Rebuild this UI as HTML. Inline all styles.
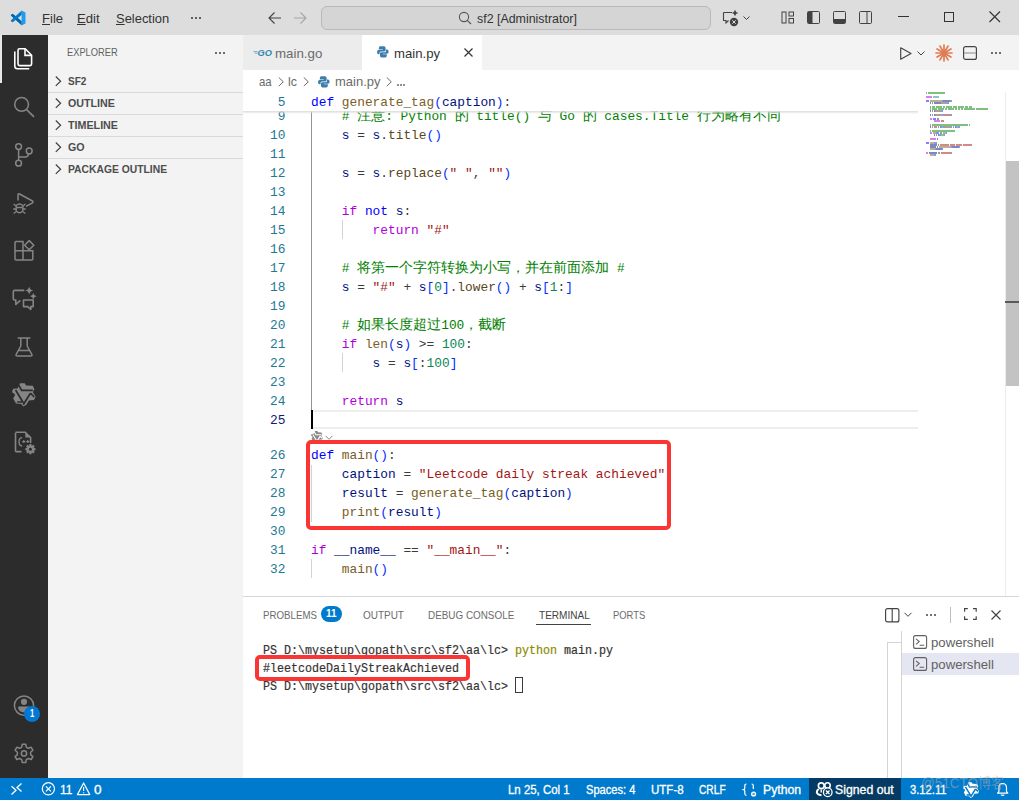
<!DOCTYPE html>
<html><head><meta charset="utf-8">
<style>
*{margin:0;padding:0;box-sizing:border-box}
html,body{width:1019px;height:800px;overflow:hidden;background:#fff;font-family:"Liberation Sans",sans-serif;position:relative}
.a{position:absolute}
svg{position:absolute;overflow:visible}
.t{position:absolute;white-space:pre;line-height:1;transform-origin:0 0}
.cl{position:absolute;white-space:pre;font-family:"Liberation Mono",monospace;font-size:12.83px;line-height:19px;height:19px;left:311px}
.cj{font-size:14px}
.ln{position:absolute;white-space:pre;font-family:"Liberation Mono",monospace;font-size:12.83px;line-height:19px;height:19px;color:#237893;text-align:right;width:80px;left:205.5px}
.k{color:#0000ff}.f{color:#795e26}.m{color:#5a4520}.p{color:#001080}.c{color:#008000}.s{color:#a31515}.kc{color:#af00db}.n{color:#098658}.b{color:#0431fa}.o{color:#3b3b3b}
.tl{position:absolute;white-space:pre;font-family:"Liberation Mono",monospace;font-size:13px;line-height:18px;height:18px;left:263px;color:#333;transform:scaleX(0.8975);transform-origin:0 0;-webkit-text-stroke:0.2px #333}
</style></head><body>
<div class="a" style="left:0px;top:0px;width:1019px;height:35px;background:#dddddd;"></div>
<div class="a" style="left:0px;top:35px;width:48px;height:743px;background:#2c2c2c;"></div>
<div class="a" style="left:0px;top:35px;width:2px;height:48px;background:#e8e8e8;"></div>
<div class="a" style="left:48px;top:35px;width:195px;height:743px;background:#f3f3f3;"></div>
<div class="a" style="left:243px;top:35px;width:776px;height:35px;background:#f3f3f3;"></div>
<div class="a" style="left:243px;top:35px;width:119px;height:35px;background:#ececec;"></div>
<div class="a" style="left:362px;top:35px;width:120px;height:35px;background:#ffffff;"></div>
<div class="a" style="left:0px;top:778px;width:1019px;height:22px;background:#007acc;"></div>
<svg class="a" style="left:10px;top:10px" width="16" height="16" viewBox="0 0 16 16"><path d="M11.8 15.4 L1 5.7 Q0.5 5.2 1 4.8 L2.1 3.9 Q2.6 3.6 3.1 3.9 L11.8 11.2 Z" fill="#0065a9"/><path d="M11.8 0.6 L1 10.3 Q0.5 10.8 1 11.2 L2.1 12.1 Q2.6 12.4 3.1 12.1 L11.8 4.8 Z" fill="#007acc"/><path d="M11.6 0.5 L15 2.2 Q15.5 2.5 15.5 3 V13 Q15.5 13.5 15 13.8 L11.6 15.5 Z" fill="#1f9cf0"/></svg>
<div class="t" style="left:42.15px;top:12.30px;font-size:13px;font-weight:normal;color:#333;font-family:'Liberation Sans',sans-serif;transform:scaleX(1.0049);"><u>F</u>ile</div>
<div class="t" style="left:77.35px;top:12.30px;font-size:13px;font-weight:normal;color:#333;font-family:'Liberation Sans',sans-serif;transform:scaleX(1.0068);"><u>E</u>dit</div>
<div class="t" style="left:115.62px;top:12.30px;font-size:13px;font-weight:normal;color:#333;font-family:'Liberation Sans',sans-serif;transform:scaleX(0.9949);"><u>S</u>election</div>
<div class="a" style="left:191px;top:17px;width:2px;height:2px;background:#333;border-radius:1px"></div>
<div class="a" style="left:195px;top:17px;width:2px;height:2px;background:#333;border-radius:1px"></div>
<div class="a" style="left:199px;top:17px;width:2px;height:2px;background:#333;border-radius:1px"></div>
<svg class="a" style="left:267px;top:11px" width="15" height="14" viewBox="0 0 15 14"><path d="M7.5 1.5 L2 7 L7.5 12.5 M2 7 H14" stroke="#424242" stroke-width="1.1" fill="none"/></svg>
<svg class="a" style="left:293px;top:11px" width="15" height="14" viewBox="0 0 15 14"><path d="M7.5 1.5 L13 7 L7.5 12.5 M13 7 H1" stroke="#a6a6a6" stroke-width="1.1" fill="none"/></svg>
<div class="a" style="left:321px;top:6px;width:390px;height:24px;background:#d5d5d5;border:1px solid #b9b9b9;border-radius:6px"></div>
<svg class="a" style="left:458px;top:11px" width="14" height="14" viewBox="0 0 14 14"><circle cx="6" cy="6" r="4.6" stroke="#555" stroke-width="1.1" fill="none"/><path d="M9.3 9.3 L13 13" stroke="#555" stroke-width="1.2"/></svg>
<div class="t" style="left:476.63px;top:13.34px;font-size:12px;font-weight:normal;color:#333;font-family:'Liberation Sans',sans-serif;transform:scaleX(1.0329);">sf2 [Administrator]</div>
<svg class="a" style="left:722px;top:10px" width="30" height="16" viewBox="0 0 30 16"><path d="M1.5 2.5 H10 M1.5 2.5 V10.5 H4 V13 L6.5 10.5" stroke="#424242" stroke-width="1.1" fill="none"/><path d="M13 -0.20000000000000018 Q13.512 2.488 16.2 3 Q13.512 3.512 13 6.2 Q12.488 3.512 9.8 3 Q12.488 2.488 13 -0.20000000000000018Z" fill="#424242"/><circle cx="12" cy="12" r="4.2" fill="#424242"/><path d="M10.3 10.3 L13.7 13.7 M13.7 10.3 L10.3 13.7" stroke="#ddd" stroke-width="1"/><path d="M21.5 6.5 L24.5 9.5 L27.5 6.5" stroke="#424242" stroke-width="1" fill="none"/></svg>
<svg class="a" style="left:781px;top:11px" width="14" height="13" viewBox="0 0 14 13"><rect x="1" y="1" width="4" height="11" stroke="#424242" stroke-width="1" fill="none"/><rect x="8" y="1" width="4.5" height="4" stroke="#424242" stroke-width="1" fill="none"/><rect x="8" y="7.5" width="4.5" height="4.5" stroke="#424242" stroke-width="1" fill="none"/></svg>
<svg class="a" style="left:807px;top:11px" width="14" height="13" viewBox="0 0 14 13"><rect x="0.5" y="0.5" width="12" height="12" rx="1" stroke="#424242" stroke-width="1" fill="none"/><rect x="1" y="1" width="4.5" height="11" fill="#424242"/></svg>
<svg class="a" style="left:833px;top:11px" width="14" height="13" viewBox="0 0 14 13"><rect x="0.5" y="0.5" width="12" height="12" rx="1" stroke="#424242" stroke-width="1" fill="none"/><rect x="1" y="8" width="11" height="4" fill="#424242"/></svg>
<svg class="a" style="left:859px;top:11px" width="14" height="13" viewBox="0 0 14 13"><rect x="0.5" y="0.5" width="12" height="12" rx="1" stroke="#424242" stroke-width="1" fill="none"/><path d="M8 1 V12" stroke="#424242" stroke-width="1"/></svg>
<div class="a" style="left:898px;top:16px;width:11px;height:1px;background:#333;"></div>
<div class="a" style="left:944px;top:12px;width:10px;height:10px;background:transparent;border:1px solid #333"></div>
<svg class="a" style="left:989px;top:11px" width="12" height="12" viewBox="0 0 12 12"><path d="M0.5 0.5 L11 11 M11 0.5 L0.5 11" stroke="#333" stroke-width="1.1"/></svg>
<svg class="a" style="left:12px;top:47px" width="24" height="24" viewBox="0 0 24 24"><path d="M7.6 1.8 H13.2 L19.6 8.2 V17 Q19.6 18.6 18 18.6 H7.6 Q6 18.6 6 17 V3.4 Q6 1.8 7.6 1.8 Z" stroke="#fff" stroke-width="1.6" fill="none" stroke-linejoin="round"/><path d="M13 2 V8.4 H19.4" stroke="#fff" stroke-width="1.6" fill="none"/><path d="M2.8 4.4 V19 Q2.8 21.8 5.6 21.8 H17.2" stroke="#fff" stroke-width="1.6" fill="none"/></svg>
<svg class="a" style="left:12px;top:95px" width="24" height="24" viewBox="0 0 24 24"><circle cx="9.6" cy="9.4" r="6.9" stroke="#858585" stroke-width="1.6" fill="none"/><path d="M14.5 14.5 L22 21.8" stroke="#858585" stroke-width="1.7"/></svg>
<svg class="a" style="left:12px;top:143px" width="24" height="24" viewBox="0 0 24 24"><circle cx="6.6" cy="3.6" r="2.9" stroke="#858585" stroke-width="1.5" fill="none"/><circle cx="17.2" cy="8" r="2.9" stroke="#858585" stroke-width="1.5" fill="none"/><circle cx="6.6" cy="20.2" r="2.9" stroke="#858585" stroke-width="1.5" fill="none"/><path d="M6.6 6.5 V17.3 M6.6 14 H13.5 Q16 14 16.6 10.8" stroke="#858585" stroke-width="1.5" fill="none"/></svg>
<svg class="a" style="left:12px;top:191px" width="24" height="24" viewBox="0 0 24 24"><path d="M6 9.5 V3.8 Q6 2.3 7.6 3 L20.5 10 Q21.5 11 20.5 11.8 L14 15.3" stroke="#858585" stroke-width="1.5" fill="none" stroke-linejoin="round"/><path d="M4.2 14.5 Q7.5 11.5 10.8 14.5 V20 Q7.5 23.5 4.2 20 Z" stroke="#858585" stroke-width="1.4" fill="none"/><path d="M4.3 16.5 H10.7 M1.6 13 L4 15 M13.4 13 L11 15 M1.2 18 H4.2 M13.8 18 H10.8 M1.6 22.5 L4 20.8 M13.4 22.5 L11 20.8" stroke="#858585" stroke-width="1.3"/></svg>
<svg class="a" style="left:12px;top:239px" width="24" height="24" viewBox="0 0 24 24"><path d="M4 2.5 H11 V11.8 H20.8 V20 Q20.8 21 19.8 21 H4 Q3 21 3 20 V3.5 Q3 2.5 4 2.5 Z M3 11.8 H11 V21" stroke="#858585" stroke-width="1.5" fill="none"/><path d="M17.2 1.6 L21.8 6.2 L17.2 10.8 L12.6 6.2 Z" stroke="#858585" stroke-width="1.5" fill="none" stroke-linejoin="round"/></svg>
<svg class="a" style="left:12px;top:287px" width="24" height="24" viewBox="0 0 24 24"><path d="M12.3 3.4 H2.6 Q1.3 3.4 1.3 4.7 V11.8 Q1.3 13 2.6 13 H3.8 V17.5 L8.3 13.3" stroke="#858585" stroke-width="1.6" fill="none" stroke-linejoin="round"/><path d="M11.5 13 H21.2 V19.6 H18.8 V22.4 L15.6 19.6 H11.5 Z" stroke="#858585" stroke-width="1.6" fill="none" stroke-linejoin="round"/><path d="M17.2 -0.49999999999999956 Q17.855999999999998 2.944 21.299999999999997 3.6 Q17.855999999999998 4.256 17.2 7.699999999999999 Q16.544 4.256 13.1 3.6 Q16.544 2.944 17.2 -0.49999999999999956Z" fill="#858585"/><path d="M21.3 5.8999999999999995 Q21.828 8.671999999999999 24.6 9.2 Q21.828 9.728 21.3 12.5 Q20.772000000000002 9.728 18.0 9.2 Q20.772000000000002 8.671999999999999 21.3 5.8999999999999995Z" fill="#858585"/></svg>
<svg class="a" style="left:12px;top:335px" width="24" height="24" viewBox="0 0 24 24"><path d="M5.6 3 H18.4 M8.8 3 V11 L4.2 19.3 Q3.5 21 5.3 21 H18.7 Q20.5 21 19.8 19.3 L15.2 11 V3 M6.6 15.4 H17.4" stroke="#858585" stroke-width="1.5" fill="none" stroke-linejoin="round"/></svg>
<svg class="a" style="left:12px;top:383px" width="24" height="24" viewBox="0 0 24 24"><path d="M8 0.2 L12.8 0.2 L14 2.6 L20.8 2.8 L22.4 6.2 L20.8 9 L23.6 13.8 L22 17 L16.8 17.4 L14.4 21.8 L11.2 23.4 L9.2 21 L4 20.6 L1.2 15.4 L3.2 11.8 L0 9 L1.2 5.8 L5.6 5.4 Z" fill="#858585"/><path d="M6.8 2.2 L9.6 7.4 L20.8 7.4 M3.6 7 L10.8 19 L5.2 19 M18.4 10.2 L11.2 21.8 M18.4 10.2 L22.2 14" stroke="#2c2c2c" stroke-width="1.7" fill="none"/></svg>
<svg class="a" style="left:12px;top:431px" width="24" height="24" viewBox="0 0 24 24"><path d="M3.5 1.2 H13.2 L18.6 6.6 V12 M9.5 20.6 H4.2 Q3.5 20.6 3.5 19.8 V1.8" stroke="#858585" stroke-width="1.6" fill="none"/><path d="M13.3 1.3 V6.5 H18.5 Z" fill="#858585"/><path d="M10.2 6.6 Q7 6.6 7 10.8 Q7 15 10.2 15" stroke="#858585" stroke-width="1.3" fill="none"/><path d="M10.3 10.6 H13.3 M11.8 9.1 V12.1 M14.3 10.6 H17.3 M15.8 9.1 V12.1" stroke="#858585" stroke-width="1.1"/><path d="M21.86 16.90 L23.50 17.17 L23.50 19.23 L21.86 19.50 L21.77 19.73 L22.73 21.07 L21.27 22.53 L19.93 21.57 L19.70 21.66 L19.43 23.30 L17.37 23.30 L17.10 21.66 L16.87 21.57 L15.53 22.53 L14.07 21.07 L15.03 19.73 L14.94 19.50 L13.30 19.23 L13.30 17.17 L14.94 16.90 L15.03 16.67 L14.07 15.33 L15.53 13.87 L16.87 14.83 L17.10 14.74 L17.37 13.10 L19.43 13.10 L19.70 14.74 L19.93 14.83 L21.27 13.87 L22.73 15.33 L21.77 16.67Z" fill="#858585"/><circle cx="18.4" cy="18.2" r="1.5" fill="#2c2c2c"/></svg>
<svg class="a" style="left:12px;top:693px" width="24" height="24" viewBox="0 0 24 24"><circle cx="12" cy="12.6" r="9.6" stroke="#858585" stroke-width="1.5" fill="none"/><circle cx="12" cy="8.8" r="3.1" fill="#858585"/><path d="M6 14.6 Q6 13.6 7 13.6 H17 Q18 13.6 18 14.6 Q17 19.5 12 19.5 Q7 19.5 6 14.6Z" fill="#858585"/></svg>
<div class="a" style="left:24px;top:705.5px;width:16px;height:16px;border-radius:8px;background:#0078d4"></div>
<div class="t" style="left:29.74px;top:709.03px;font-size:10px;font-weight:bold;color:#fff;font-family:'Liberation Sans',sans-serif;transform:scaleX(0.7660);">1</div>
<svg class="a" style="left:12px;top:742px" width="24" height="24" viewBox="0 0 24 24"><path d="M10.3 2.2 H13.7 L14.3 5.2 L16.3 6.3 L19.2 5.3 L20.9 8.2 L18.6 10.2 V12.6 L20.9 14.6 L19.2 17.5 L16.3 16.5 L14.3 17.6 L13.7 20.6 H10.3 L9.7 17.6 L7.7 16.5 L4.8 17.5 L3.1 14.6 L5.4 12.6 V10.2 L3.1 8.2 L4.8 5.3 L7.7 6.3 L9.7 5.2 Z" stroke="#858585" stroke-width="1.5" fill="none" stroke-linejoin="round"/><circle cx="12" cy="11.4" r="2.6" stroke="#858585" stroke-width="1.5" fill="none"/></svg>
<div class="t" style="left:67.46px;top:47.49px;font-size:11px;font-weight:normal;color:#616161;font-family:'Liberation Sans',sans-serif;transform:scaleX(0.8459);">EXPLORER</div>
<div class="a" style="left:215px;top:52px;width:2px;height:2px;background:#424242;border-radius:1px"></div>
<div class="a" style="left:219px;top:52px;width:2px;height:2px;background:#424242;border-radius:1px"></div>
<div class="a" style="left:223px;top:52px;width:2px;height:2px;background:#424242;border-radius:1px"></div>
<svg class="a" style="left:54px;top:75px" width="10" height="12" viewBox="0 0 10 12"><path d="M1.8 1.5 L6.6 6.2 L1.8 10.9" stroke="#424242" stroke-width="1.2" fill="none"/></svg>
<div class="t" style="left:67.90px;top:76.19px;font-size:11px;font-weight:bold;color:#4d4d4d;font-family:'Liberation Sans',sans-serif;transform:scaleX(0.9117);">SF2</div>
<div class="a" style="left:48px;top:92px;width:195px;height:1px;background:#d9d9d9;"></div>
<svg class="a" style="left:54px;top:97px" width="10" height="12" viewBox="0 0 10 12"><path d="M1.8 1.5 L6.6 6.2 L1.8 10.9" stroke="#424242" stroke-width="1.2" fill="none"/></svg>
<div class="t" style="left:67.77px;top:98.19px;font-size:11px;font-weight:bold;color:#4d4d4d;font-family:'Liberation Sans',sans-serif;transform:scaleX(0.9703);">OUTLINE</div>
<div class="a" style="left:48px;top:114px;width:195px;height:1px;background:#d9d9d9;"></div>
<svg class="a" style="left:54px;top:119px" width="10" height="12" viewBox="0 0 10 12"><path d="M1.8 1.5 L6.6 6.2 L1.8 10.9" stroke="#424242" stroke-width="1.2" fill="none"/></svg>
<div class="t" style="left:68.09px;top:120.19px;font-size:11px;font-weight:bold;color:#4d4d4d;font-family:'Liberation Sans',sans-serif;transform:scaleX(0.9740);">TIMELINE</div>
<div class="a" style="left:48px;top:136px;width:195px;height:1px;background:#d9d9d9;"></div>
<svg class="a" style="left:54px;top:141px" width="10" height="12" viewBox="0 0 10 12"><path d="M1.8 1.5 L6.6 6.2 L1.8 10.9" stroke="#424242" stroke-width="1.2" fill="none"/></svg>
<div class="t" style="left:67.77px;top:142.19px;font-size:11px;font-weight:bold;color:#4d4d4d;font-family:'Liberation Sans',sans-serif;transform:scaleX(0.9676);">GO</div>
<div class="a" style="left:48px;top:158px;width:195px;height:1px;background:#d9d9d9;"></div>
<svg class="a" style="left:54px;top:163px" width="10" height="12" viewBox="0 0 10 12"><path d="M1.8 1.5 L6.6 6.2 L1.8 10.9" stroke="#424242" stroke-width="1.2" fill="none"/></svg>
<div class="t" style="left:67.53px;top:164.19px;font-size:11px;font-weight:bold;color:#4d4d4d;font-family:'Liberation Sans',sans-serif;transform:scaleX(0.9388);">PACKAGE OUTLINE</div>
<svg class="a" style="left:253px;top:48px" width="20" height="10" viewBox="0 0 20 10"><path d="M0.5 3.6 H4.5 M1.8 5.2 H4.6" stroke="#6aa6c8" stroke-width="0.9"/><text x="4.6" y="8.3" font-family="Liberation Sans" font-weight="bold" font-style="italic" font-size="9.6" fill="#3188b3" textLength="14.4" lengthAdjust="spacingAndGlyphs">GO</text></svg>
<div class="t" style="left:274.54px;top:46.50px;font-size:13px;font-weight:normal;color:#6b6b6b;font-family:'Liberation Sans',sans-serif;transform:scaleX(1.0234);">main.go</div>
<svg class="a" style="left:377px;top:46px" width="12" height="12" viewBox="0 0 12 12"><path d="M5.6 0.3 H3.4 Q1.8 0.3 1.8 1.9 V3.4 H5.8 V4 H1.6 Q0 4 0 5.9 Q0 8.3 1.6 8.3 H2.6 V6.8 Q2.6 5.4 4 5.4 H7.3 Q8.6 5.4 8.6 4 V1.9 Q8.6 0.3 7 0.3Z" fill="#3b7dab"/><path d="M6 11.4 H8.2 Q9.8 11.4 9.8 9.8 V8.3 H5.8 V7.7 H10 Q11.6 7.7 11.6 5.8 Q11.6 3.4 10 3.4 H9 V4.9 Q9 6.3 7.6 6.3 H4.3 Q3 6.3 3 7.7 V9.8 Q3 11.4 4.6 11.4Z" fill="#3b7dab"/></svg>
<div class="t" style="left:394.24px;top:46.50px;font-size:13px;font-weight:normal;color:#333;font-family:'Liberation Sans',sans-serif;transform:scaleX(1.0122);">main.py</div>
<svg class="a" style="left:463.5px;top:48.3px" width="9" height="9" viewBox="0 0 9 9"><path d="M0.5 0.5 L8.5 8.5 M8.5 0.5 L0.5 8.5" stroke="#333" stroke-width="1.15"/></svg>
<svg class="a" style="left:900px;top:46.5px" width="12" height="13" viewBox="0 0 12 13"><path d="M0.7 0.8 L11 6.5 L0.7 12.2 Z" stroke="#424242" stroke-width="1.15" fill="none" stroke-linejoin="round"/></svg>
<svg class="a" style="left:917px;top:50.5px" width="9" height="5" viewBox="0 0 9 5"><path d="M0.5 0.5 L4 4 L7.5 0.5" stroke="#424242" stroke-width="1" fill="none"/></svg>
<svg class="a" style="left:936px;top:44.7px" width="16" height="16" viewBox="0 0 16 16"><g transform="translate(8,8)"><path d="M0 0 L8 0" transform="rotate(0)" stroke="#e07a52" stroke-width="1.7" stroke-linecap="round"/><path d="M0 0 L8 0" transform="rotate(30)" stroke="#e07a52" stroke-width="1.7" stroke-linecap="round"/><path d="M0 0 L8 0" transform="rotate(60)" stroke="#e07a52" stroke-width="1.7" stroke-linecap="round"/><path d="M0 0 L8 0" transform="rotate(90)" stroke="#e07a52" stroke-width="1.7" stroke-linecap="round"/><path d="M0 0 L8 0" transform="rotate(120)" stroke="#e07a52" stroke-width="1.7" stroke-linecap="round"/><path d="M0 0 L8 0" transform="rotate(150)" stroke="#e07a52" stroke-width="1.7" stroke-linecap="round"/><path d="M0 0 L8 0" transform="rotate(180)" stroke="#e07a52" stroke-width="1.7" stroke-linecap="round"/><path d="M0 0 L8 0" transform="rotate(210)" stroke="#e07a52" stroke-width="1.7" stroke-linecap="round"/><path d="M0 0 L8 0" transform="rotate(240)" stroke="#e07a52" stroke-width="1.7" stroke-linecap="round"/><path d="M0 0 L8 0" transform="rotate(270)" stroke="#e07a52" stroke-width="1.7" stroke-linecap="round"/><path d="M0 0 L8 0" transform="rotate(300)" stroke="#e07a52" stroke-width="1.7" stroke-linecap="round"/><path d="M0 0 L8 0" transform="rotate(330)" stroke="#e07a52" stroke-width="1.7" stroke-linecap="round"/><circle r="2.6" fill="#e07a52"/></g></svg>
<svg class="a" style="left:963px;top:46px" width="14" height="14" viewBox="0 0 14 14"><rect x="0.6" y="0.6" width="12.8" height="12.8" rx="2" stroke="#424242" stroke-width="1.15" fill="none"/><path d="M1 7 H13" stroke="#9a9a9a" stroke-width="1.2"/></svg>
<div class="a" style="left:991px;top:52px;width:2px;height:2px;background:#424242;border-radius:1px"></div>
<div class="a" style="left:995px;top:52px;width:2px;height:2px;background:#424242;border-radius:1px"></div>
<div class="a" style="left:999px;top:52px;width:2px;height:2px;background:#424242;border-radius:1px"></div>
<div class="t" style="left:258.54px;top:74.90px;font-size:13px;font-weight:normal;color:#6b6b6b;font-family:'Liberation Sans',sans-serif;transform:scaleX(0.8771);">aa</div>
<svg class="a" style="left:277.5px;top:77px" width="7" height="10" viewBox="0 0 7 10"><path d="M0.8 0.5 L5.3 4.8 L0.8 9.1" stroke="#6b6b6b" stroke-width="1" fill="none"/></svg>
<div class="t" style="left:288.10px;top:74.90px;font-size:13px;font-weight:normal;color:#6b6b6b;font-family:'Liberation Sans',sans-serif;transform:scaleX(0.9524);">lc</div>
<svg class="a" style="left:302.5px;top:77px" width="7" height="10" viewBox="0 0 7 10"><path d="M0.8 0.5 L5.3 4.8 L0.8 9.1" stroke="#6b6b6b" stroke-width="1" fill="none"/></svg>
<svg class="a" style="left:317.8px;top:75.5px" width="12" height="12" viewBox="0 0 12 12"><path d="M5.6 0.3 H3.4 Q1.8 0.3 1.8 1.9 V3.4 H5.8 V4 H1.6 Q0 4 0 5.9 Q0 8.3 1.6 8.3 H2.6 V6.8 Q2.6 5.4 4 5.4 H7.3 Q8.6 5.4 8.6 4 V1.9 Q8.6 0.3 7 0.3Z" fill="#3b7dab"/><path d="M6 11.4 H8.2 Q9.8 11.4 9.8 9.8 V8.3 H5.8 V7.7 H10 Q11.6 7.7 11.6 5.8 Q11.6 3.4 10 3.4 H9 V4.9 Q9 6.3 7.6 6.3 H4.3 Q3 6.3 3 7.7 V9.8 Q3 11.4 4.6 11.4Z" fill="#3b7dab"/></svg>
<div class="t" style="left:334.66px;top:74.90px;font-size:13px;font-weight:normal;color:#6b6b6b;font-family:'Liberation Sans',sans-serif;transform:scaleX(0.9988);">main.py</div>
<svg class="a" style="left:385.5px;top:77px" width="7" height="10" viewBox="0 0 7 10"><path d="M0.8 0.5 L5.3 4.8 L0.8 9.1" stroke="#6b6b6b" stroke-width="1" fill="none"/></svg>
<div class="a" style="left:397px;top:84px;width:1.6px;height:1.6px;background:#6b6b6b;border-radius:1px"></div>
<div class="a" style="left:400px;top:84px;width:1.6px;height:1.6px;background:#6b6b6b;border-radius:1px"></div>
<div class="a" style="left:403px;top:84px;width:1.6px;height:1.6px;background:#6b6b6b;border-radius:1px"></div>
<div class="a" style="left:311px;top:410px;width:607px;height:19px;background:transparent;border-top:2px solid #eeeeee;border-bottom:2px solid #eeeeee"></div>
<div class="ln" style="top:107.0px;color:#237893">9</div>
<div class="cl" style="top:107.0px">    <span class="c"># <span class="cj">注意</span>: Python <span class="cj">的</span> title() <span class="cj">与</span> Go <span class="cj">的</span> cases.Title <span class="cj">行为略有不同</span></span></div>
<div class="ln" style="top:126.0px;color:#237893">10</div>
<div class="cl" style="top:126.0px">    <span class="p">s</span><span class="o"> = </span><span class="p">s</span><span class="o">.</span><span class="m">title</span><span class="b">()</span></div>
<div class="ln" style="top:145.0px;color:#237893">11</div>
<div class="ln" style="top:164.0px;color:#237893">12</div>
<div class="cl" style="top:164.0px">    <span class="p">s</span><span class="o"> = </span><span class="p">s</span><span class="o">.</span><span class="m">replace</span><span class="b">(</span><span class="s">&quot; &quot;</span><span class="o">, </span><span class="s">&quot;&quot;</span><span class="b">)</span></div>
<div class="ln" style="top:183.0px;color:#237893">13</div>
<div class="ln" style="top:202.0px;color:#237893">14</div>
<div class="cl" style="top:202.0px">    <span class="kc">if</span> <span class="k">not</span> <span class="p">s</span><span class="o">:</span></div>
<div class="ln" style="top:221.0px;color:#237893">15</div>
<div class="cl" style="top:221.0px">        <span class="kc">return</span> <span class="s">&quot;#&quot;</span></div>
<div class="ln" style="top:240.0px;color:#237893">16</div>
<div class="ln" style="top:259.0px;color:#237893">17</div>
<div class="cl" style="top:259.0px">    <span class="c"># <span class="cj">将第一个字符转换为小写，并在前面添加</span> #</span></div>
<div class="ln" style="top:278.0px;color:#237893">18</div>
<div class="cl" style="top:278.0px">    <span class="p">s</span><span class="o"> = </span><span class="s">&quot;#&quot;</span><span class="o"> + </span><span class="p">s</span><span class="b">[</span><span class="n">0</span><span class="b">]</span><span class="o">.</span><span class="m">lower</span><span class="b">()</span><span class="o"> + </span><span class="p">s</span><span class="b">[</span><span class="n">1</span><span class="o">:</span><span class="b">]</span></div>
<div class="ln" style="top:297.0px;color:#237893">19</div>
<div class="ln" style="top:316.0px;color:#237893">20</div>
<div class="cl" style="top:316.0px">    <span class="c"># <span class="cj">如果长度超过</span>100<span class="cj">，截断</span></span></div>
<div class="ln" style="top:335.0px;color:#237893">21</div>
<div class="cl" style="top:335.0px">    <span class="kc">if</span> <span class="f">len</span><span class="b">(</span><span class="p">s</span><span class="b">)</span><span class="o"> &gt;= </span><span class="n">100</span><span class="o">:</span></div>
<div class="ln" style="top:354.0px;color:#237893">22</div>
<div class="cl" style="top:354.0px">        <span class="p">s</span><span class="o"> = </span><span class="p">s</span><span class="b">[</span><span class="o">:</span><span class="n">100</span><span class="b">]</span></div>
<div class="ln" style="top:373.0px;color:#237893">23</div>
<div class="ln" style="top:392.0px;color:#237893">24</div>
<div class="cl" style="top:392.0px">    <span class="kc">return</span> <span class="p">s</span></div>
<div class="ln" style="top:411.0px;color:#0b216f">25</div>
<div class="ln" style="top:445.5px;color:#237893">26</div>
<div class="cl" style="top:445.5px"><span class="k">def</span> <span class="f">main</span><span class="b">()</span><span class="o">:</span></div>
<div class="ln" style="top:464.5px;color:#237893">27</div>
<div class="cl" style="top:464.5px">    <span class="p">caption</span><span class="o"> = </span><span class="s">&quot;Leetcode daily streak achieved&quot;</span></div>
<div class="ln" style="top:483.5px;color:#237893">28</div>
<div class="cl" style="top:483.5px">    <span class="p">result</span><span class="o"> = </span><span class="f">generate_tag</span><span class="b">(</span><span class="p">caption</span><span class="b">)</span></div>
<div class="ln" style="top:502.5px;color:#237893">29</div>
<div class="cl" style="top:502.5px">    <span class="f">print</span><span class="b">(</span><span class="p">result</span><span class="b">)</span></div>
<div class="ln" style="top:521.5px;color:#237893">30</div>
<div class="ln" style="top:540.5px;color:#237893">31</div>
<div class="cl" style="top:540.5px"><span class="kc">if</span> <span class="p">__name__</span><span class="o"> == </span><span class="s">&quot;__main__&quot;</span><span class="o">:</span></div>
<div class="ln" style="top:559.5px;color:#237893">32</div>
<div class="cl" style="top:559.5px">    <span class="f">main</span><span class="b">()</span></div>
<div class="a" style="left:311px;top:111px;width:1px;height:299px;background:#939393;"></div>
<div class="a" style="left:342px;top:220px;width:1px;height:19px;background:#d3d3d3;"></div>
<div class="a" style="left:342px;top:353px;width:1px;height:19px;background:#d3d3d3;"></div>
<div class="a" style="left:311px;top:464.5px;width:1px;height:57px;background:#d3d3d3;"></div>
<div class="a" style="left:311px;top:558.5px;width:1px;height:19px;background:#d3d3d3;"></div>
<div class="a" style="left:311px;top:410px;width:2px;height:19px;background:#000;"></div>
<svg class="a" style="left:311px;top:430.5px" width="24" height="12" viewBox="0 0 24 12"><g transform="scale(0.5)"><path d="M8 0.2 L12.8 0.2 L14 2.6 L20.8 2.8 L22.4 6.2 L20.8 9 L23.6 13.8 L22 17 L16.8 17.4 L14.4 21.8 L11.2 23.4 L9.2 21 L4 20.6 L1.2 15.4 L3.2 11.8 L0 9 L1.2 5.8 L5.6 5.4 Z" fill="#8a8a8a"/><path d="M6.8 2.2 L9.6 7.4 L20.8 7.4 M3.6 7 L10.8 19 L5.2 19 M18.4 10.2 L11.2 21.8 M18.4 10.2 L22.2 14" stroke="#ffffff" stroke-width="2.2" fill="none"/></g><path d="M14.5 4.8 L18 8.3 L21.5 4.8" stroke="#8a8a8a" stroke-width="1" fill="none"/></svg>
<div class="a" style="left:243px;top:92px;width:675px;height:19px;background:#ffffff;"></div>
<div class="a" style="left:243px;top:111px;width:675px;height:3px;background:linear-gradient(#dcdcdc,rgba(255,255,255,0))"></div>
<div class="ln" style="top:93.0px">5</div>
<div class="cl" style="top:93.0px"><span class="k">def</span> <span class="f">generate_tag</span><span class="b">(</span><span class="p">caption</span><span class="b">)</span><span class="o">:</span></div>
<div class="a" style="left:306px;top:440px;width:364.5px;height:90px;border:4px solid #fb3434;border-radius:5px"></div>
<div class="a" style="left:1005px;top:92px;width:1px;height:504px;background:#ececec;"></div>
<div class="a" style="left:1006px;top:161px;width:13px;height:225px;background:#c3c3c3;"></div>
<div class="a" style="left:1005px;top:301px;width:14px;height:2px;background:#5a5a5a;"></div>
<div class="a" style="left:926px;top:92px;width:1px;height:2px;background:#008000;opacity:.5"></div>
<div class="a" style="left:928px;top:92px;width:17px;height:2px;background:#008000;opacity:.5"></div>
<div class="a" style="left:926px;top:96px;width:6px;height:2px;background:#af00db;opacity:.5"></div>
<div class="a" style="left:933px;top:96px;width:6px;height:2px;background:#267f99;opacity:.5"></div>
<div class="a" style="left:926px;top:100px;width:3px;height:2px;background:#0000ff;opacity:.5"></div>
<div class="a" style="left:930px;top:100px;width:12px;height:2px;background:#795e26;opacity:.5"></div>
<div class="a" style="left:942px;top:100px;width:1px;height:2px;background:#0431fa;opacity:.5"></div>
<div class="a" style="left:943px;top:100px;width:7px;height:2px;background:#001080;opacity:.5"></div>
<div class="a" style="left:950px;top:100px;width:1px;height:2px;background:#0431fa;opacity:.5"></div>
<div class="a" style="left:951px;top:100px;width:1px;height:2px;background:#3b3b3b;opacity:.5"></div>
<div class="a" style="left:930px;top:102px;width:1px;height:2px;background:#001080;opacity:.5"></div>
<div class="a" style="left:932px;top:102px;width:1px;height:2px;background:#3b3b3b;opacity:.5"></div>
<div class="a" style="left:934px;top:102px;width:7px;height:2px;background:#001080;opacity:.5"></div>
<div class="a" style="left:941px;top:102px;width:1px;height:2px;background:#3b3b3b;opacity:.5"></div>
<div class="a" style="left:942px;top:102px;width:5px;height:2px;background:#5a4520;opacity:.5"></div>
<div class="a" style="left:947px;top:102px;width:2px;height:2px;background:#0431fa;opacity:.5"></div>
<div class="a" style="left:930px;top:106px;width:1px;height:2px;background:#008000;opacity:.5"></div>
<div class="a" style="left:932px;top:106px;width:3px;height:2px;background:#008000;opacity:.5"></div>
<div class="a" style="left:936px;top:106px;width:6px;height:2px;background:#008000;opacity:.5"></div>
<div class="a" style="left:943px;top:106px;width:2px;height:2px;background:#008000;opacity:.5"></div>
<div class="a" style="left:946px;top:106px;width:6px;height:2px;background:#008000;opacity:.5"></div>
<div class="a" style="left:953px;top:106px;width:4px;height:2px;background:#008000;opacity:.5"></div>
<div class="a" style="left:958px;top:106px;width:6px;height:2px;background:#008000;opacity:.5"></div>
<div class="a" style="left:965px;top:106px;width:3px;height:2px;background:#008000;opacity:.5"></div>
<div class="a" style="left:969px;top:106px;width:3px;height:2px;background:#008000;opacity:.5"></div>
<div class="a" style="left:930px;top:108px;width:1px;height:2px;background:#008000;opacity:.5"></div>
<div class="a" style="left:932px;top:108px;width:5px;height:2px;background:#008000;opacity:.5"></div>
<div class="a" style="left:938px;top:108px;width:6px;height:2px;background:#008000;opacity:.5"></div>
<div class="a" style="left:945px;top:108px;width:2px;height:2px;background:#008000;opacity:.5"></div>
<div class="a" style="left:948px;top:108px;width:6px;height:2px;background:#008000;opacity:.5"></div>
<div class="a" style="left:955px;top:108px;width:2px;height:2px;background:#008000;opacity:.5"></div>
<div class="a" style="left:958px;top:108px;width:2px;height:2px;background:#008000;opacity:.5"></div>
<div class="a" style="left:961px;top:108px;width:2px;height:2px;background:#008000;opacity:.5"></div>
<div class="a" style="left:964px;top:108px;width:11px;height:2px;background:#008000;opacity:.5"></div>
<div class="a" style="left:976px;top:108px;width:12px;height:2px;background:#008000;opacity:.5"></div>
<div class="a" style="left:930px;top:110px;width:1px;height:2px;background:#001080;opacity:.5"></div>
<div class="a" style="left:932px;top:110px;width:1px;height:2px;background:#3b3b3b;opacity:.5"></div>
<div class="a" style="left:934px;top:110px;width:1px;height:2px;background:#001080;opacity:.5"></div>
<div class="a" style="left:935px;top:110px;width:1px;height:2px;background:#3b3b3b;opacity:.5"></div>
<div class="a" style="left:936px;top:110px;width:5px;height:2px;background:#5a4520;opacity:.5"></div>
<div class="a" style="left:941px;top:110px;width:2px;height:2px;background:#0431fa;opacity:.5"></div>
<div class="a" style="left:930px;top:114px;width:1px;height:2px;background:#001080;opacity:.5"></div>
<div class="a" style="left:932px;top:114px;width:1px;height:2px;background:#3b3b3b;opacity:.5"></div>
<div class="a" style="left:934px;top:114px;width:1px;height:2px;background:#001080;opacity:.5"></div>
<div class="a" style="left:935px;top:114px;width:1px;height:2px;background:#3b3b3b;opacity:.5"></div>
<div class="a" style="left:936px;top:114px;width:7px;height:2px;background:#5a4520;opacity:.5"></div>
<div class="a" style="left:943px;top:114px;width:1px;height:2px;background:#0431fa;opacity:.5"></div>
<div class="a" style="left:944px;top:114px;width:3px;height:2px;background:#a31515;opacity:.5"></div>
<div class="a" style="left:947px;top:114px;width:2px;height:2px;background:#3b3b3b;opacity:.5"></div>
<div class="a" style="left:949px;top:114px;width:2px;height:2px;background:#a31515;opacity:.5"></div>
<div class="a" style="left:951px;top:114px;width:1px;height:2px;background:#0431fa;opacity:.5"></div>
<div class="a" style="left:930px;top:118px;width:2px;height:2px;background:#af00db;opacity:.5"></div>
<div class="a" style="left:933px;top:118px;width:3px;height:2px;background:#0000ff;opacity:.5"></div>
<div class="a" style="left:937px;top:118px;width:1px;height:2px;background:#001080;opacity:.5"></div>
<div class="a" style="left:938px;top:118px;width:1px;height:2px;background:#3b3b3b;opacity:.5"></div>
<div class="a" style="left:934px;top:120px;width:6px;height:2px;background:#af00db;opacity:.5"></div>
<div class="a" style="left:941px;top:120px;width:3px;height:2px;background:#a31515;opacity:.5"></div>
<div class="a" style="left:930px;top:124px;width:1px;height:2px;background:#008000;opacity:.5"></div>
<div class="a" style="left:932px;top:124px;width:36px;height:2px;background:#008000;opacity:.5"></div>
<div class="a" style="left:969px;top:124px;width:1px;height:2px;background:#008000;opacity:.5"></div>
<div class="a" style="left:930px;top:126px;width:1px;height:2px;background:#001080;opacity:.5"></div>
<div class="a" style="left:932px;top:126px;width:1px;height:2px;background:#3b3b3b;opacity:.5"></div>
<div class="a" style="left:934px;top:126px;width:3px;height:2px;background:#a31515;opacity:.5"></div>
<div class="a" style="left:938px;top:126px;width:1px;height:2px;background:#3b3b3b;opacity:.5"></div>
<div class="a" style="left:940px;top:126px;width:1px;height:2px;background:#001080;opacity:.5"></div>
<div class="a" style="left:941px;top:126px;width:1px;height:2px;background:#0431fa;opacity:.5"></div>
<div class="a" style="left:942px;top:126px;width:1px;height:2px;background:#098658;opacity:.5"></div>
<div class="a" style="left:943px;top:126px;width:1px;height:2px;background:#0431fa;opacity:.5"></div>
<div class="a" style="left:944px;top:126px;width:1px;height:2px;background:#3b3b3b;opacity:.5"></div>
<div class="a" style="left:945px;top:126px;width:5px;height:2px;background:#5a4520;opacity:.5"></div>
<div class="a" style="left:950px;top:126px;width:2px;height:2px;background:#0431fa;opacity:.5"></div>
<div class="a" style="left:953px;top:126px;width:1px;height:2px;background:#3b3b3b;opacity:.5"></div>
<div class="a" style="left:955px;top:126px;width:1px;height:2px;background:#001080;opacity:.5"></div>
<div class="a" style="left:956px;top:126px;width:1px;height:2px;background:#0431fa;opacity:.5"></div>
<div class="a" style="left:957px;top:126px;width:1px;height:2px;background:#098658;opacity:.5"></div>
<div class="a" style="left:958px;top:126px;width:1px;height:2px;background:#3b3b3b;opacity:.5"></div>
<div class="a" style="left:959px;top:126px;width:1px;height:2px;background:#0431fa;opacity:.5"></div>
<div class="a" style="left:930px;top:130px;width:1px;height:2px;background:#008000;opacity:.5"></div>
<div class="a" style="left:932px;top:130px;width:23px;height:2px;background:#008000;opacity:.5"></div>
<div class="a" style="left:930px;top:132px;width:2px;height:2px;background:#af00db;opacity:.5"></div>
<div class="a" style="left:933px;top:132px;width:3px;height:2px;background:#795e26;opacity:.5"></div>
<div class="a" style="left:936px;top:132px;width:1px;height:2px;background:#0431fa;opacity:.5"></div>
<div class="a" style="left:937px;top:132px;width:1px;height:2px;background:#001080;opacity:.5"></div>
<div class="a" style="left:938px;top:132px;width:1px;height:2px;background:#0431fa;opacity:.5"></div>
<div class="a" style="left:940px;top:132px;width:2px;height:2px;background:#3b3b3b;opacity:.5"></div>
<div class="a" style="left:943px;top:132px;width:3px;height:2px;background:#098658;opacity:.5"></div>
<div class="a" style="left:946px;top:132px;width:1px;height:2px;background:#3b3b3b;opacity:.5"></div>
<div class="a" style="left:934px;top:134px;width:1px;height:2px;background:#001080;opacity:.5"></div>
<div class="a" style="left:936px;top:134px;width:1px;height:2px;background:#3b3b3b;opacity:.5"></div>
<div class="a" style="left:938px;top:134px;width:1px;height:2px;background:#001080;opacity:.5"></div>
<div class="a" style="left:939px;top:134px;width:1px;height:2px;background:#0431fa;opacity:.5"></div>
<div class="a" style="left:940px;top:134px;width:1px;height:2px;background:#3b3b3b;opacity:.5"></div>
<div class="a" style="left:941px;top:134px;width:3px;height:2px;background:#098658;opacity:.5"></div>
<div class="a" style="left:944px;top:134px;width:1px;height:2px;background:#0431fa;opacity:.5"></div>
<div class="a" style="left:930px;top:138px;width:6px;height:2px;background:#af00db;opacity:.5"></div>
<div class="a" style="left:937px;top:138px;width:1px;height:2px;background:#001080;opacity:.5"></div>
<div class="a" style="left:926px;top:142px;width:3px;height:2px;background:#0000ff;opacity:.5"></div>
<div class="a" style="left:930px;top:142px;width:4px;height:2px;background:#795e26;opacity:.5"></div>
<div class="a" style="left:934px;top:142px;width:2px;height:2px;background:#0431fa;opacity:.5"></div>
<div class="a" style="left:936px;top:142px;width:1px;height:2px;background:#3b3b3b;opacity:.5"></div>
<div class="a" style="left:930px;top:144px;width:7px;height:2px;background:#001080;opacity:.5"></div>
<div class="a" style="left:938px;top:144px;width:1px;height:2px;background:#3b3b3b;opacity:.5"></div>
<div class="a" style="left:940px;top:144px;width:9px;height:2px;background:#a31515;opacity:.5"></div>
<div class="a" style="left:950px;top:144px;width:5px;height:2px;background:#a31515;opacity:.5"></div>
<div class="a" style="left:956px;top:144px;width:6px;height:2px;background:#a31515;opacity:.5"></div>
<div class="a" style="left:963px;top:144px;width:9px;height:2px;background:#a31515;opacity:.5"></div>
<div class="a" style="left:930px;top:146px;width:6px;height:2px;background:#001080;opacity:.5"></div>
<div class="a" style="left:937px;top:146px;width:1px;height:2px;background:#3b3b3b;opacity:.5"></div>
<div class="a" style="left:939px;top:146px;width:12px;height:2px;background:#795e26;opacity:.5"></div>
<div class="a" style="left:951px;top:146px;width:1px;height:2px;background:#0431fa;opacity:.5"></div>
<div class="a" style="left:952px;top:146px;width:7px;height:2px;background:#001080;opacity:.5"></div>
<div class="a" style="left:959px;top:146px;width:1px;height:2px;background:#0431fa;opacity:.5"></div>
<div class="a" style="left:930px;top:148px;width:5px;height:2px;background:#795e26;opacity:.5"></div>
<div class="a" style="left:935px;top:148px;width:1px;height:2px;background:#0431fa;opacity:.5"></div>
<div class="a" style="left:936px;top:148px;width:6px;height:2px;background:#001080;opacity:.5"></div>
<div class="a" style="left:942px;top:148px;width:1px;height:2px;background:#0431fa;opacity:.5"></div>
<div class="a" style="left:926px;top:152px;width:2px;height:2px;background:#af00db;opacity:.5"></div>
<div class="a" style="left:929px;top:152px;width:8px;height:2px;background:#001080;opacity:.5"></div>
<div class="a" style="left:938px;top:152px;width:2px;height:2px;background:#3b3b3b;opacity:.5"></div>
<div class="a" style="left:941px;top:152px;width:10px;height:2px;background:#a31515;opacity:.5"></div>
<div class="a" style="left:951px;top:152px;width:1px;height:2px;background:#3b3b3b;opacity:.5"></div>
<div class="a" style="left:930px;top:154px;width:4px;height:2px;background:#795e26;opacity:.5"></div>
<div class="a" style="left:934px;top:154px;width:2px;height:2px;background:#0431fa;opacity:.5"></div>
<div class="a" style="left:243px;top:596px;width:776px;height:1px;background:#d6d6d6;"></div>
<div class="t" style="left:262.72px;top:609.59px;font-size:11px;font-weight:normal;color:#6b6b6b;font-family:'Liberation Sans',sans-serif;transform:scaleX(0.8823);">PROBLEMS</div>
<div class="a" style="left:321px;top:606px;width:21px;height:16px;border-radius:8px;background:#007acc"></div>
<div class="t" style="left:325.71px;top:609.33px;font-size:10px;font-weight:bold;color:#fff;font-family:'Liberation Sans',sans-serif;transform:scaleX(0.9897);">11</div>
<div class="t" style="left:363.15px;top:609.59px;font-size:11px;font-weight:normal;color:#6b6b6b;font-family:'Liberation Sans',sans-serif;transform:scaleX(0.9057);">OUTPUT</div>
<div class="t" style="left:428.11px;top:609.59px;font-size:11px;font-weight:normal;color:#6b6b6b;font-family:'Liberation Sans',sans-serif;transform:scaleX(0.8985);">DEBUG CONSOLE</div>
<div class="t" style="left:538.50px;top:609.59px;font-size:11px;font-weight:normal;color:#424242;font-family:'Liberation Sans',sans-serif;transform:scaleX(0.9118);">TERMINAL</div>
<div class="a" style="left:536px;top:624px;width:55px;height:1px;background:#424242;"></div>
<div class="t" style="left:613.15px;top:609.59px;font-size:11px;font-weight:normal;color:#6b6b6b;font-family:'Liberation Sans',sans-serif;transform:scaleX(0.8567);">PORTS</div>
<svg class="a" style="left:884.5px;top:607.5px" width="15" height="15" viewBox="0 0 15 15"><rect x="0.6" y="0.6" width="13.3" height="13.3" rx="2" stroke="#424242" stroke-width="1.15" fill="none"/><path d="M7.2 1 V14" stroke="#424242" stroke-width="1.1"/></svg>
<svg class="a" style="left:904px;top:612px" width="9" height="6" viewBox="0 0 9 6"><path d="M0.5 0.8 L4 4.3 L7.5 0.8" stroke="#424242" stroke-width="1" fill="none"/></svg>
<div class="a" style="left:926px;top:614px;width:2px;height:2px;background:#424242;border-radius:1px"></div>
<div class="a" style="left:930px;top:614px;width:2px;height:2px;background:#424242;border-radius:1px"></div>
<div class="a" style="left:934px;top:614px;width:2px;height:2px;background:#424242;border-radius:1px"></div>
<div class="a" style="left:950px;top:607px;width:1px;height:16px;background:#bdbdbd;"></div>
<svg class="a" style="left:963.5px;top:608px" width="13" height="12" viewBox="0 0 13 12"><path d="M0.6 3.8 V0.6 H3.8 M9 0.6 H12.2 V3.8 M12.2 8.2 V11.4 H9 M3.8 11.4 H0.6 V8.2" stroke="#424242" stroke-width="1.15" fill="none"/></svg>
<svg class="a" style="left:991px;top:609.5px" width="10" height="10" viewBox="0 0 10 10"><path d="M0.5 0.5 L9.5 9.5 M9.5 0.5 L0.5 9.5" stroke="#424242" stroke-width="1.15"/></svg>
<div class="tl" style="top:641.6px">PS D:\mysetup\gopath\src\sf2\aa\lc&gt; <span style="color:#8a8c00;-webkit-text-stroke:0.2px #8a8c00">python</span> main.py</div>
<div class="tl" style="top:659.6px">#leetcodeDailyStreakAchieved</div>
<div class="tl" style="top:677.6px">PS D:\mysetup\gopath\src\sf2\aa\lc&gt; </div>
<div class="a" style="left:515px;top:677px;width:8px;height:16px;border:1px solid #3b3b3b"></div>
<div class="a" style="left:255px;top:655px;width:215px;height:25.7px;border:4px solid #fb3434;border-radius:5px"></div>
<div class="a" style="left:901px;top:631px;width:1px;height:147px;background:#d4d4d4;"></div>
<div class="a" style="left:887px;top:642px;width:1px;height:136px;background:#d4d4d4;"></div>
<div class="a" style="left:887px;top:642px;width:14px;height:1px;background:#d4d4d4;"></div>
<div class="a" style="left:902px;top:653px;width:117px;height:21.5px;background:#e4e6f1;"></div>
<svg class="a" style="left:913px;top:635px" width="15" height="15" viewBox="0 0 15 15"><rect x="0.6" y="0.6" width="13" height="12.8" rx="2" stroke="#616161" stroke-width="1.1" fill="none"/><path d="M3 3.8 L6.2 6.6 L3 9.4 M6.6 10.2 H11.2" stroke="#616161" stroke-width="1.1" fill="none"/></svg>
<svg class="a" style="left:913px;top:657.3px" width="15" height="15" viewBox="0 0 15 15"><rect x="0.6" y="0.6" width="13" height="12.8" rx="2" stroke="#616161" stroke-width="1.1" fill="none"/><path d="M3 3.8 L6.2 6.6 L3 9.4 M6.6 10.2 H11.2" stroke="#616161" stroke-width="1.1" fill="none"/></svg>
<div class="t" style="left:930.94px;top:635.80px;font-size:13px;font-weight:normal;color:#616161;font-family:'Liberation Sans',sans-serif;transform:scaleX(1.0124);">powershell</div>
<div class="t" style="left:930.94px;top:657.70px;font-size:13px;font-weight:normal;color:#616161;font-family:'Liberation Sans',sans-serif;transform:scaleX(1.0124);">powershell</div>
<svg class="a" style="left:10px;top:782px" width="13" height="14" viewBox="0 0 13 14"><path d="M1.5 12.5 L6 8.2 L1.5 4.3 M11.5 1.5 L7 5.6 L11.5 9.6" stroke="#fff" stroke-width="1.3" fill="none"/></svg>
<svg class="a" style="left:41px;top:782px" width="15" height="15" viewBox="0 0 15 15"><circle cx="7.4" cy="6.8" r="6.1" stroke="#fff" stroke-width="1.2" fill="none"/><path d="M4.9 4.3 L9.9 9.3 M9.9 4.3 L4.9 9.3" stroke="#fff" stroke-width="1.2"/></svg>
<div class="t" style="left:59.61px;top:783.54px;font-size:12px;font-weight:normal;color:#ffffff;font-family:'Liberation Sans',sans-serif;transform:scaleX(0.9836);-webkit-text-stroke:0.3px #fff">11</div>
<svg class="a" style="left:77px;top:782px" width="14" height="14" viewBox="0 0 14 14"><path d="M6.6 1 L12.8 12.6 H0.4 Z" stroke="#fff" stroke-width="1.2" fill="none" stroke-linejoin="round"/><path d="M6.6 5 V9 M6.6 10.2 V11.2" stroke="#fff" stroke-width="1.1"/></svg>
<div class="t" style="left:94.46px;top:783.54px;font-size:12px;font-weight:normal;color:#ffffff;font-family:'Liberation Sans',sans-serif;transform:scaleX(1.1285);-webkit-text-stroke:0.3px #fff">0</div>
<div class="t" style="left:508.39px;top:783.84px;font-size:12px;font-weight:normal;color:#ffffff;font-family:'Liberation Sans',sans-serif;transform:scaleX(0.9528);-webkit-text-stroke:0.3px #fff">Ln 25, Col 1</div>
<div class="t" style="left:586.20px;top:783.84px;font-size:12px;font-weight:normal;color:#ffffff;font-family:'Liberation Sans',sans-serif;transform:scaleX(0.9249);-webkit-text-stroke:0.3px #fff">Spaces: 4</div>
<div class="t" style="left:650.74px;top:783.84px;font-size:12px;font-weight:normal;color:#ffffff;font-family:'Liberation Sans',sans-serif;transform:scaleX(0.9607);-webkit-text-stroke:0.3px #fff">UTF-8</div>
<div class="t" style="left:698.79px;top:783.84px;font-size:12px;font-weight:normal;color:#ffffff;font-family:'Liberation Sans',sans-serif;transform:scaleX(0.8499);-webkit-text-stroke:0.3px #fff">CRLF</div>
<svg class="a" style="left:743px;top:783px" width="14" height="14" viewBox="0 0 14 14"><path d="M3.5 1 Q1.8 1 1.8 2.8 V5 Q1.8 6.3 0.6 6.6 Q1.8 7 1.8 8.3 V10.5 Q1.8 12.3 3.5 12.3" stroke="#fff" stroke-width="1.2" fill="none"/><path d="M8.6 1 Q10.3 1 10.3 2.8 V6" stroke="#fff" stroke-width="1.2" fill="none"/><circle cx="10.6" cy="11" r="2.6" fill="#fff"/><path d="M9.5 9.9 L11.7 12.1 M11.7 9.9 L9.5 12.1" stroke="#007acc" stroke-width="0.9"/></svg>
<div class="t" style="left:763.02px;top:783.84px;font-size:12px;font-weight:normal;color:#ffffff;font-family:'Liberation Sans',sans-serif;transform:scaleX(1.0202);-webkit-text-stroke:0.3px #fff">Python</div>
<div class="a" style="left:809px;top:778px;width:92px;height:22px;background:#053b63;"></div>
<svg class="a" style="left:812px;top:779px" width="24" height="20" viewBox="0 0 24 20"><circle cx="9.25" cy="6.75" r="2.9" stroke="#fff" stroke-width="1.6" fill="none"/><circle cx="15.5" cy="6.5" r="2.7" stroke="#fff" stroke-width="1.6" fill="none"/><path d="M6.8 10.2 Q4.8 11.2 4.8 13.2 Q5.2 16 9.5 16.3" stroke="#fff" stroke-width="2" fill="none"/><path d="M9.2 10.5 V13.5" stroke="#fff" stroke-width="1.4"/><circle cx="15.75" cy="13.25" r="4.3" stroke="#fff" stroke-width="1.3" fill="#053b63"/><path d="M14 11.5 L17.5 15 M17.5 11.5 L14 15" stroke="#fff" stroke-width="1.4"/></svg>
<div class="t" style="left:835.25px;top:783.84px;font-size:12px;font-weight:normal;color:#ffffff;font-family:'Liberation Sans',sans-serif;transform:scaleX(1.0236);-webkit-text-stroke:0.3px #fff">Signed out</div>
<div class="t" style="left:909.55px;top:783.84px;font-size:12px;font-weight:normal;color:#ffffff;font-family:'Liberation Sans',sans-serif;transform:scaleX(0.9344);-webkit-text-stroke:0.3px #fff">3.12.11</div>
<svg class="a" style="left:963px;top:782px" width="24" height="24" viewBox="0 0 24 24"><g transform="scale(0.68)"><path d="M8 0.2 L12.8 0.2 L14 2.6 L20.8 2.8 L22.4 6.2 L20.8 9 L23.6 13.8 L22 17 L16.8 17.4 L14.4 21.8 L11.2 23.4 L9.2 21 L4 20.6 L1.2 15.4 L3.2 11.8 L0 9 L1.2 5.8 L5.6 5.4 Z" fill="#fff"/><path d="M6.8 2.2 L9.6 7.4 L20.8 7.4 M3.6 7 L10.8 19 L5.2 19 M18.4 10.2 L11.2 21.8 M18.4 10.2 L22.2 14" stroke="#007acc" stroke-width="2.2" fill="none"/></g></svg>
<svg class="a" style="left:997px;top:781.5px" width="12" height="14" viewBox="0 0 12 14"><path d="M5.6 1.5 Q9.5 1.5 9.5 6 V9.6 L10.8 11.2 H0.6 L1.9 9.6 V6 Q1.9 1.5 5.6 1.5Z M4 12.6 Q5.6 14.2 7.3 12.6" stroke="#fff" stroke-width="1.2" fill="none" stroke-linejoin="round"/></svg>
<div class="t" style="left:921px;top:775px;font-size:15px;color:rgba(175,175,175,0.55);transform:scaleX(0.9)">@51CTO博客</div>
</body></html>
